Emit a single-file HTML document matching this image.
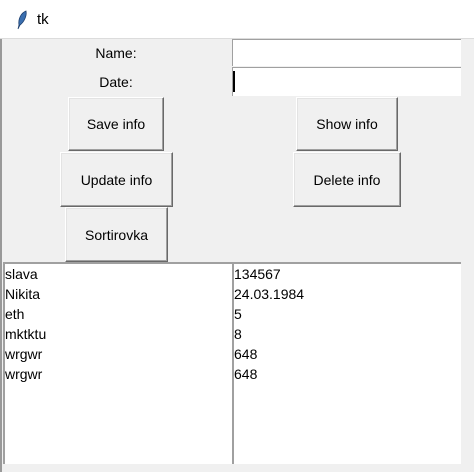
<!DOCTYPE html>
<html><head><style>
*{margin:0;padding:0;box-sizing:border-box}
body{width:474px;height:472px;background:#f0f0f0;position:relative;overflow:hidden;font-family:"Liberation Sans",sans-serif;font-size:14px;color:#000}
.a{position:absolute}
.title{left:0;top:0;width:474px;height:39px;background:#fff;border-bottom:1px solid #dcdcdc}
.lb{text-align:center}
.entry{background:#fff;border-top:1px solid #a0a0a0;border-left:1px solid #a0a0a0}
.btn{background:#f0f0f0;border:1px solid;border-color:#fff #696969 #696969 #fff;box-shadow:inset -1px -1px 0 #a0a0a0, inset 1px 1px 0 #e3e3e3;display:flex;align-items:center;justify-content:center}
.list{background:#fff;border-top:2px solid #a0a0a0;border-left:2px solid #a0a0a0;line-height:20px;padding-left:0;padding-top:0}
</style></head><body>
<div class="a" style="left:0;top:0;width:2px;height:472px;background:#999"></div>
<div class="a title"></div>
<svg class="a" style="left:16px;top:10px" width="12" height="20" viewBox="0 0 12 20"><path d="M10 1 C5 3 2 9 3 15 L2 19 L4 15 C8 12 11 6 10 1Z" fill="#3a6fb0" stroke="#1d3f6e" stroke-width="0.8"/></svg>
<div class="a" style="left:37px;top:11px;font-size:15px">tk</div>
<div class="a lb" style="left:76px;top:45px;width:80px">Name:</div>
<div class="a lb" style="left:76px;top:74px;width:80px">Date:</div>
<div class="a entry" style="left:232px;top:39px;width:229px;height:27px"></div>
<div class="a entry" style="left:232px;top:67px;width:229px;height:29px"></div>
<div class="a" style="left:233px;top:71px;width:2px;height:21px;background:#000"></div>
<div class="a btn" style="left:68px;top:97px;width:96px;height:54px">Save info</div>
<div class="a btn" style="left:296px;top:97px;width:102px;height:54px">Show info</div>
<div class="a btn" style="left:60px;top:152px;width:113px;height:55px">Update info</div>
<div class="a btn" style="left:293px;top:152px;width:108px;height:55px">Delete info</div>
<div class="a btn" style="left:65px;top:207px;width:103px;height:55px">Sortirovka</div>
<div class="a list" style="left:3px;top:262px;width:229px;height:202px">slava<br>Nikita<br>eth<br>mktktu<br>wrgwr<br>wrgwr</div>
<div class="a list" style="left:232px;top:262px;width:229px;height:202px">134567<br>24.03.1984<br>5<br>8<br>648<br>648</div>
</body></html>
